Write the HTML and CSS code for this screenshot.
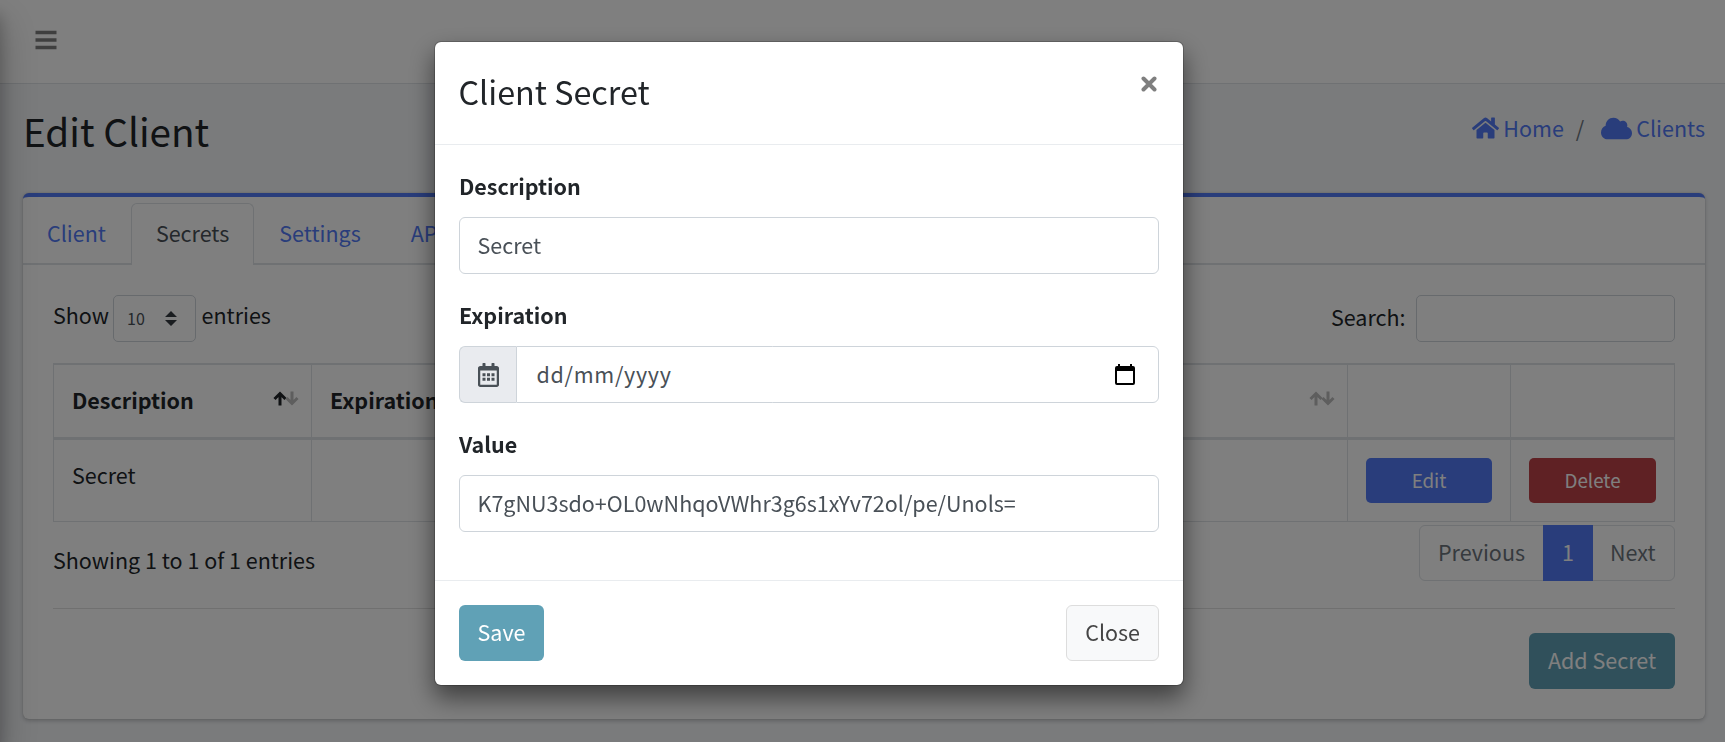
FILE: index.html
```
<!DOCTYPE html>
<html lang="en">

<head>
    <meta charset="UTF-8">
    <title>Edit Client</title>
    <link rel="stylesheet" href="styles.css">
</head>
<body>
<div class="sidebar"></div>
<nav class="navbar">
    <a class="navbar-toggle" href="#">
        <svg width="22" height="20" viewBox="0 0 22 20"><path d="M.5 2.500h21M.5 10h21M.5 17.500h21" stroke="currentColor" stroke-width="3.300"/></svg>
    </a>
</nav>

<div class="content-header">
    <h1>Edit Client</h1>
    <ol class="breadcrumb">
        <li>
            <a href="#">
                <svg class="icon-home" viewBox="0 0 576 512"><path fill="currentColor" d="M280.37 148.26L96 300.11V464a16 16 0 0 0 16 16l112.06-.29a16 16 0 0 0 15.92-16V368a16 16 0 0 1 16-16h64a16 16 0 0 1 16 16v95.64a16 16 0 0 0 16 16.05L464 480a16 16 0 0 0 16-16V300L295.67 148.26a12.19 12.19 0 0 0-15.3 0zM571.6 251.47L488 182.56V44.05a12 12 0 0 0-12-12h-56a12 12 0 0 0-12 12v72.61L318.47 43a48 48 0 0 0-61 0L4.34 251.47a12 12 0 0 0-1.6 16.9l25.5 31A12 12 0 0 0 45.15 301l235.22-193.74a12.19 12.19 0 0 1 15.3 0L530.9 301a12 12 0 0 0 16.9-1.6l25.5-31a12 12 0 0 0-1.7-16.93z"/></svg>
                Home</a>
        </li>
        <li class="separator">/</li>
        <li>
            <a href="#">
                <svg class="icon-cloud" viewBox="0 0 640 512"><path fill="currentColor" d="M537.6 226.6c4.1-10.7 6.4-22.4 6.4-34.6 0-53-43-96-96-96-19.7 0-38.1 6-53.3 16.2C367 64.2 315.3 32 256 32c-88.4 0-160 71.6-160 160 0 2.7.1 5.4.2 8.1C40.2 219.8 0 273.2 0 336c0 79.5 64.5 144 144 144h368c70.7 0 128-57.3 128-128 0-61.9-44-113.6-102.4-125.4z"/></svg>
                Clients</a>
        </li>
    </ol>
</div>

<div class="card">
    <ul class="nav-tabs">
        <li><a class="first" href="#">Client</a></li>
        <li><a class="active" href="#">Secrets</a></li>
        <li><a href="#">Settings</a></li>
        <li><a href="#">API</a></li>
    </ul>
    <div class="card-body">
        <div class="table-tools">
            <label class="length">Show
                <span class="select">10
                    <svg width="12" height="15" viewBox="0 0 12 15"><path fill="currentColor" d="M6 0l6 6H0zM6 15L0 9h12z"/></svg>
                </span>
                entries</label>
            <label class="search">Search: <input type="text"></label>
        </div>

        <table>
            <thead>
            <tr>
                <th class="col-description"><div class="th-inner">Description
                    <svg class="sort" viewBox="0 0 26 16"><path class="on" d="M7 14.500V3M1.500 8L7 2.500L12.500 8"/><path d="M19 0.500V12M13.500 7L19 12.500L24.500 7"/></svg></div></th>
                <th class="col-expiration"><div class="th-inner">Expiration
                    <svg class="sort" viewBox="0 0 26 16"><path d="M7 14.500V3M1.500 8L7 2.500L12.500 8"/><path d="M19 0.500V12M13.500 7L19 12.500L24.500 7"/></svg></div></th>
                <th class="col-edit"></th>
                <th class="col-delete"></th>
            </tr>
            </thead>
            <tbody>
            <tr>
                <td>Secret</td>
                <td></td>
                <td class="action"><button class="btn btn-sm btn-primary">Edit</button></td>
                <td class="action"><button class="btn btn-sm btn-danger">Delete</button></td>
            </tr>
            </tbody>
        </table>

        <div class="table-footer">
            <div class="info">Showing 1 to 1 of 1 entries</div>
            <ul class="pagination">
                <li class="previous">Previous</li>
                <li class="active">1</li>
                <li class="next">Next</li>
            </ul>
        </div>
        <hr>
        <div class="card-actions">
            <button class="btn btn-info btn-add">Add Secret</button>
        </div>
    </div>
</div>

<div class="backdrop">
    <div class="modal">
        <div class="modal-header">
            <h4>Client Secret</h4>
            <button class="close" aria-label="Close">
                <svg width="16" height="16" viewBox="0 0 16 16"><path d="M2.500 2.500l11 11M13.500 2.500l-11 11" stroke="currentColor" stroke-width="4" stroke-linecap="round"/></svg>
            </button>
        </div>
        <div class="modal-body">
            <div class="form-group">
                <label for="description">Description</label>
                <input class="form-control" id="description" type="text" value="Secret">
            </div>
            <div class="form-group">
                <label>Expiration</label>
                <div class="input-group">
                    <span class="input-group-text">
                        <svg width="21" height="24" viewBox="0 0 448 512"><path fill="currentColor" d="M400 64h-48V12c0-6.600-5.400-12-12-12h-40c-6.600 0-12 5.400-12 12v52H160V12c0-6.600-5.400-12-12-12h-40c-6.600 0-12 5.400-12 12v52H48C21.500 64 0 85.500 0 112v352c0 26.500 21.500 48 48 48h352c26.500 0 48-21.500 48-48V112c0-26.500-21.500-48-48-48zm-6 400H54c-3.300 0-6-2.700-6-6V160h352v298c0 3.300-2.700 6-6 6z"/><path fill="currentColor" d="M96 216h64v64H96zm96 0h64v64h-64zm96 0h64v64h-64zM96 312h64v64H96zm96 0h64v64h-64zm96 0h64v64h-64z"/></svg>
                    </span>
                    <div class="form-control date">
                        <span class="date-text">dd/mm/yyyy</span>
                        <svg width="20" height="22" viewBox="0 0 20 22"><path d="M3 0h2v2h10V0h2v2h1a2 2 0 0 1 2 2v15a2 2 0 0 1-2 2H2a2 2 0 0 1-2-2V4a2 2 0 0 1 2-2h1zM2 7v12h16V7z"/></svg>
                    </div>
                </div>
            </div>
            <div class="form-group">
                <label for="value">Value</label>
                <input class="form-control" id="value" type="text" value="K7gNU3sdo+OL0wNhqoVWhr3g6s1xYv72ol/pe/Unols=">
            </div>
        </div>
        <div class="modal-footer">
            <button class="btn btn-info btn-save">Save</button>
            <button class="btn btn-default">Close</button>
        </div>
    </div>
</div>
</body>
</html>
```
FILE: styles.css
```
* {
    box-sizing: border-box;
}
body {
    margin: 0;
    height: 742px;
    overflow: hidden;
    background: #f4f6f9;
    color: #212529;
    font-family: "Noto Sans CJK SC", "Noto Sans", sans-serif;
    font-size: 21.5px;
    line-height: 36px;
}
a {
    color: #527af6;
    text-decoration: none;
}
ul, ol {
    list-style: none;
    margin: 0;
    padding: 0;
}
input, button {
    font-family: inherit;
    font-size: inherit;
    line-height: inherit;
}
svg {
    display: block;
    flex: none;
}

/* collapsed sidebar, only its shadow reaches the page */
.sidebar {
    position: fixed;
    top: 0;
    bottom: 0;
    left: -100px;
    width: 100px;
    box-shadow: 0 21px 42px rgba(0, 0, 0, .25), 0 15px 15px rgba(0, 0, 0, .22);
}
.navbar {
    display: flex;
    height: 84px;
    padding: 30px 35px;
    background: #fff;
    border-bottom: 1px solid #dee2e6;
}
.navbar-toggle {
    color: #7f7f7f;
}

.content-header {
    display: flex;
    justify-content: space-between;
    height: 109px;
    padding: 22px 20px 0 23px;
}
h1 {
    margin: -2px 0 0;
    font-size: 38.7px;
    font-weight: 400;
    line-height: 52px;
}
.breadcrumb {
    display: flex;
    padding-top: 4px;
}
.breadcrumb a {
    display: flex;
    align-items: center;
    gap: 4px;
}
.breadcrumb .separator {
    padding: 0 17px 0 12px;
    color: #6c757d;
}
.icon-home {
    width: 27px;
    height: 24px;
}
.icon-cloud {
    width: 31px;
    height: 25px;
}

.card {
    margin: 0 20px 0 23px;
    height: 526px;
    background: #fff;
    border-top: 4px solid #527af6;
    border-radius: 6px;
    box-shadow: 0 0 1.5px rgba(0, 0, 0, .125), 0 1.5px 4.5px rgba(0, 0, 0, .2);
}
.nav-tabs {
    display: flex;
    height: 68px;
    padding-top: 6px;
    border-bottom: 2px solid #dee2e6;
}
.nav-tabs a {
    display: block;
    height: 62px;
    padding: 11px 24px;
    border: 1px solid transparent;
    border-bottom: 0;
    border-radius: 6px 6px 0 0;
}
.nav-tabs .first {
    padding-left: 23px;
}
.nav-tabs .active {
    color: #495057;
    background: #fff;
    border-color: #dee2e6;
}
.card-body {
    padding: 30px;
}
.table-tools {
    display: flex;
    justify-content: space-between;
    height: 68px;
}
.length, .search {
    display: flex;
    height: 47px;
}
.length {
    line-height: 39px;
}
.select {
    display: flex;
    justify-content: space-between;
    align-items: center;
    width: 83px;
    height: 47px;
    margin: 0 5.500px 0 4px;
    padding: 0 18px 0 13px;
    border: 1px solid #ced4da;
    border-radius: 5px;
    color: #495057;
    font-size: 16px;
}
.select svg {
    color: #343a40;
}
.search {
    line-height: 43px;
}
.search input {
    width: 259px;
    margin-left: 10.500px;
    border: 1px solid #ced4da;
    border-radius: 5px;
    background: #fff;
}

table {
    width: 1622px;
    table-layout: fixed;
    border-collapse: collapse;
}
th, td {
    padding: 17px 18px;
    border: 1px solid #dee2e6;
    text-align: left;
    vertical-align: top;
}
th {
    height: 74px;
    border-top-width: 2px;
    border-bottom-width: 3px;
}
td {
    height: 83px;
}
td.action {
    padding-top: 18px;
}
.th-inner {
    display: flex;
    justify-content: space-between;
}
.sort {
    width: 26px;
    height: 16px;
    margin: 9px -6px 0 0;
    fill: none;
    stroke: #bcbcbc;
    stroke-width: 3;
}
.sort .on {
    stroke: #212529;
}
.col-description {
    width: 258px;
}
.col-edit {
    width: 163px;
}
.col-delete {
    width: 164px;
}

.btn {
    height: 56px;
    padding: 0 18px 2px;
    border: 1px solid transparent;
    border-radius: 6px;
    color: #fff;
}
.btn-sm {
    display: block;
    width: 100%;
    height: 45px;
    padding-bottom: 0;
    border-radius: 5px;
    font-size: 18.8px;
}
.btn-primary {
    background: #527af6;
}
.btn-danger {
    background: #be4248;
}
.btn-info {
    background: #60a1b6;
}
.btn-default {
    background: #f8f9fa;
    border-color: #ddd;
    color: #444;
}

.table-footer {
    display: flex;
    justify-content: space-between;
    padding-top: 3px;
}
.info {
    padding-top: 17px;
}
.pagination {
    display: flex;
    width: 256px;
    height: 56px;
    border: 1px solid #dee2e6;
    border-radius: 6px;
    color: #6c757d;
    line-height: 52px;
}
.pagination .previous {
    width: 123px;
    padding-left: 18px;
}
.pagination .active {
    width: 50px;
    margin: -1px 0;
    padding-top: 1px;
    background: #527af6;
    color: #fff;
    text-align: center;
}
.pagination .next {
    padding-left: 17px;
}
hr {
    height: 1px;
    margin: 27px 0 24px;
    border: 0;
    background: #e0e0e0;
}
.card-actions {
    display: flex;
    justify-content: flex-end;
}
.btn-add {
    width: 146px;
    padding: 0 0 1px;
}

/* modal */
.backdrop {
    position: fixed;
    top: 0;
    right: 0;
    bottom: 0;
    left: 0;
    padding: 41px 0 0 434px;
    background: rgba(0, 0, 0, .5);
}
.modal {
    width: 750px;
    height: 645px;
    background: #fff;
    background-clip: padding-box;
    border: 1px solid rgba(0, 0, 0, .2);
    border-radius: 7px;
    box-shadow: 0 12px 24px rgba(0, 0, 0, .5);
}
.modal-header {
    display: flex;
    justify-content: space-between;
    height: 103px;
    padding: 23px 24px 23px 23.500px;
    border-bottom: 1px solid #e9ecef;
}
h4 {
    margin: 0;
    font-size: 32.3px;
    font-weight: 400;
    line-height: 52px;
}
.close {
    display: flex;
    height: 36px;
    padding: 11px 2px;
    border: 0;
    background: none;
    color: #7f7f7f;
}
.modal-body {
    height: 435px;
    padding: 23px 24px;
}
.form-group {
    margin-bottom: 23px;
}
.form-group label {
    display: block;
    height: 49px;
    font-weight: 700;
}
.form-control {
    display: block;
    width: 100%;
    height: 57px;
    padding: 0 18px 2px 17.500px;
    background: #fff;
    border: 1px solid #ced4da;
    border-radius: 6px;
    color: #495057;
}
.input-group {
    display: flex;
}
.input-group-text {
    display: flex;
    align-items: center;
    justify-content: center;
    width: 57px;
    height: 57px;
    border: 1px solid #ced4da;
    border-right: 0;
    border-radius: 6px 0 0 6px;
    background: #e9ebef;
    color: #495057;
}
.date {
    display: flex;
    justify-content: space-between;
    align-items: center;
    flex: 1;
    padding-left: 19.500px;
    padding-right: 23px;
    border-radius: 0 6px 6px 0;
}
.date-text {
    letter-spacing: .7px;
}
.date svg {
    fill: #000;
    margin-top: 2px;
}
.modal-footer {
    display: flex;
    justify-content: space-between;
    padding: 24px;
    border-top: 1px solid #e9ecef;
}
.btn-save {
    width: 85px;
    padding: 0 0 2px;
}
```
